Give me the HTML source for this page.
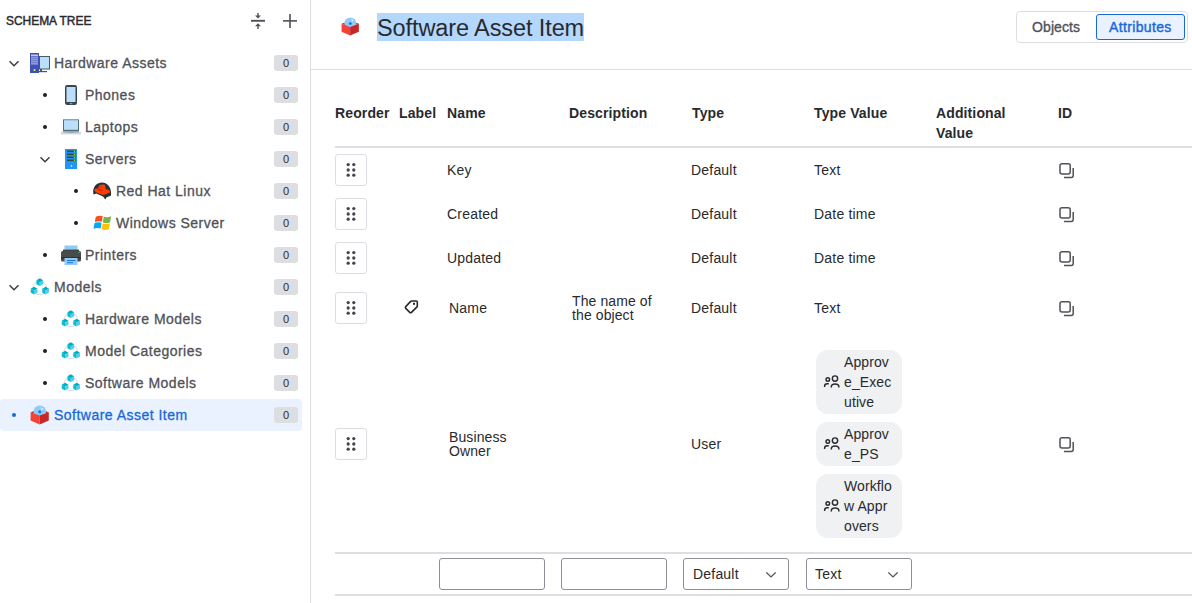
<!DOCTYPE html><html><head><meta charset="utf-8"><style>
*{box-sizing:border-box;margin:0;padding:0}
html,body{width:1192px;height:603px;overflow:hidden;background:#fff;font-family:"Liberation Sans",sans-serif;color:#292a2e}
.a{position:absolute}
svg{display:block}
.t{position:absolute;font-size:14px;line-height:20px;white-space:nowrap;color:#292a2e;letter-spacing:0.2px}
.t2{position:absolute;font-size:14px;line-height:14px;white-space:nowrap;color:#292a2e;letter-spacing:0.1px}
.th{position:absolute;font-size:14px;line-height:20px;white-space:nowrap;font-weight:bold;color:#292a2e;letter-spacing:0.12px}
.tt{position:absolute;font-size:14px;line-height:20px;white-space:nowrap;color:#505258;letter-spacing:0.48px;-webkit-text-stroke:0.3px currentColor}
.dot{position:absolute;width:4px;height:4px;border-radius:50%;background:#1f2024}
.badge{position:absolute;left:274px;width:24px;height:16px;border-radius:3px;background:#dddee1;font-size:11px;line-height:16px;text-align:center;color:#292a2e}
.hnd{position:absolute;left:335px;width:32px;height:32px;border:1px solid #dddee1;border-radius:3px}
.hnd i{position:absolute;width:3px;height:3px;border-radius:50%;background:#44464d}
.chip{position:absolute;left:816px;width:86px;background:#f0f1f2;border-radius:12px}
.inp{position:absolute;top:558px;width:106px;height:32px;border:1px solid #8c8f97;border-radius:3px;background:#fff}
</style></head><body>
<div class="a" style="left:310px;top:0;width:1px;height:603px;background:#dddee1"></div>
<div class="a" style="left:6px;top:13px;font-size:12.5px;line-height:16px;transform:scaleX(0.955);transform-origin:0 0;-webkit-text-stroke:0.45px #292a2e;color:#292a2e">SCHEMA TREE</div>
<svg class="a" style="left:250px;top:12px" width="16" height="18" viewBox="0 0 16 18"><rect x="1" y="7.85" width="14" height="1.9" fill="#505258"/><rect x="7.3" y="1" width="1.4" height="3.5" fill="#505258"/><polygon points="5,3.6 11,3.6 8,6.6" fill="#505258"/><rect x="7.3" y="13.5" width="1.4" height="3.5" fill="#505258"/><polygon points="5,14.2 11,14.2 8,11.2" fill="#505258"/></svg>
<svg class="a" style="left:282px;top:13px" width="16" height="16" viewBox="0 0 16 16"><rect x="1" y="7.1" width="14" height="1.6" fill="#505258"/><rect x="7.2" y="1" width="1.6" height="14" fill="#505258"/></svg>
<div class="a" style="left:9px;top:60px"><svg width="10" height="8" viewBox="0 0 10 8"><polyline points="0.5,1.3 5,5.7 9.5,1.3" fill="none" stroke="#3b3d42" stroke-width="1.5"/></svg></div>
<div class="a" style="left:30px;top:53px"><svg width="20" height="20" viewBox="0 0 20 20"><rect x="9.5" y="3.5" width="10" height="12.5" fill="#bbdefb" stroke="#455a64" stroke-width="1"/><rect x="10" y="16" width="2" height="2.2" fill="#455a64"/><rect x="9" y="18" width="8" height="1.2" fill="#455a64"/><rect x="0" y="0" width="9" height="20" fill="#3f51b5"/><rect x="1" y="1.5" width="7" height="1.8" fill="#c5cae9"/><rect x="1" y="4.4" width="7" height="1" fill="#c5cae9"/><rect x="1" y="6.4" width="7" height="1" fill="#c5cae9"/><rect x="1" y="8.4" width="7" height="1" fill="#c5cae9"/><rect x="1" y="10.4" width="7" height="1" fill="#c5cae9"/><circle cx="4.5" cy="17" r="1" fill="#eeff41"/></svg></div>
<div class="tt" style="left:54px;top:53px;color:#505258">Hardware Assets</div>
<div class="badge" style="top:55px">0</div>
<div class="dot" style="left:43px;top:93px;background:#1f2024"></div>
<div class="a" style="left:61px;top:85px"><svg width="20" height="20" viewBox="0 0 20 20"><rect x="4" y="0" width="12" height="20" rx="2.2" fill="#37474f"/><rect x="5.5" y="2" width="9" height="15" fill="#bbdefb"/><ellipse cx="10" cy="18.6" rx="1.6" ry="0.6" fill="#90a4ae"/></svg></div>
<div class="tt" style="left:85px;top:85px;color:#505258">Phones</div>
<div class="badge" style="top:87px">0</div>
<div class="dot" style="left:43px;top:125px;background:#1f2024"></div>
<div class="a" style="left:61px;top:117px"><svg width="20" height="20" viewBox="0 0 20 20"><rect x="2" y="2" width="16" height="12.6" fill="#546e7a"/><rect x="2" y="2" width="16" height="1" fill="#90a4ae"/><rect x="3" y="3.2" width="14" height="9.6" fill="#bbdefb"/><rect x="0" y="14.6" width="20" height="2.8" fill="#cfd8dc"/><rect x="2.5" y="14.6" width="15" height="0.8" fill="#78909c"/><rect x="7.5" y="15.2" width="5" height="0.8" fill="#90a4ae"/></svg></div>
<div class="tt" style="left:85px;top:117px;color:#505258">Laptops</div>
<div class="badge" style="top:119px">0</div>
<div class="a" style="left:40px;top:156px"><svg width="10" height="8" viewBox="0 0 10 8"><polyline points="0.5,1.3 5,5.7 9.5,1.3" fill="none" stroke="#3b3d42" stroke-width="1.5"/></svg></div>
<div class="a" style="left:61px;top:149px"><svg width="20" height="20" viewBox="0 0 20 20"><rect x="4" y="0" width="12" height="20" fill="#2196f3"/><rect x="6" y="1.5" width="9" height="1.6" fill="#37474f"/><rect x="12.8" y="1.5" width="1.4" height="1.6" fill="#64dd17"/><rect x="6" y="4.5" width="9" height="1.6" fill="#37474f"/><rect x="12.8" y="4.5" width="1.4" height="1.6" fill="#64dd17"/><rect x="6" y="7.5" width="9" height="1.6" fill="#37474f"/><rect x="12.8" y="7.5" width="1.4" height="1.6" fill="#64dd17"/><rect x="6" y="10.5" width="9" height="1.6" fill="#37474f"/><rect x="12.8" y="10.5" width="1.4" height="1.6" fill="#64dd17"/><circle cx="10.5" cy="17" r="0.8" fill="#fff"/></svg></div>
<div class="tt" style="left:85px;top:149px;color:#505258">Servers</div>
<div class="badge" style="top:151px">0</div>
<div class="dot" style="left:74px;top:189px;background:#1f2024"></div>
<div class="a" style="left:92px;top:181px"><svg width="20" height="20" viewBox="0 0 20 20"><path d="M1.5,13.6 L4.3,12.6 L11,15.6 L13.3,18.4 L14.7,16.2 L18.8,14.7 C20.2,7 15.8,1.4 10,1.4 C4.2,1.4 0,6.5 1.5,13.4 Z" fill="#263238"/><path d="M2.5,8.3 C4,7.4 5.5,7.6 6.4,7.3 C6.4,5.5 6.6,4.3 7.6,3.9 C9,3.6 11,3.2 12.3,3.5 C13.4,3.9 13.5,6.5 13.6,8.1 C15,8.6 17.6,9 17.9,10.2 C18,11.6 17,12 16.2,12 C14,13.5 12,13.9 10.5,13.7 C7.5,13.1 4.5,11.6 3.2,10.5 C2.5,9.5 2.2,8.8 2.5,8.3 Z" fill="#ff3d00"/><polygon points="6.3,8.1 10.2,9.0 10.2,9.9 6.1,9.1" fill="#8a2a10"/><rect x="7.3" y="5.3" width="1.7" height="0.8" fill="#a33010"/></svg></div>
<div class="tt" style="left:116px;top:181px;color:#505258">Red Hat Linux</div>
<div class="badge" style="top:183px">0</div>
<div class="dot" style="left:74px;top:221px;background:#1f2024"></div>
<div class="a" style="left:92px;top:213px"><svg width="20" height="20" viewBox="0 0 20 20"><g transform="translate(0,2) scale(1,0.84) translate(0,-1.5)"><path d="M3.8,3.5 Q7.2,1.5 10.8,3 L9.8,9.6 Q6.4,8.2 2.8,9.8 Z" fill="#f4511e"/><path d="M11.8,3.6 Q15.2,5 19.2,3 L18,10.5 Q14.4,12 10.8,10.4 Z" fill="#7cb342"/><path d="M2.6,10.9 Q6,9.4 9.6,10.8 L8.6,17.6 Q5,16 1.4,17.8 Z" fill="#03a9f4"/><path d="M10.6,11.6 Q14.2,13 17.8,11.6 L16.8,18.6 Q13.2,20 9.6,18.4 Z" fill="#ffc107"/></g></svg></div>
<div class="tt" style="left:116px;top:213px;color:#505258">Windows Server</div>
<div class="badge" style="top:215px">0</div>
<div class="dot" style="left:43px;top:253px;background:#1f2024"></div>
<div class="a" style="left:61px;top:245px"><svg width="20" height="20" viewBox="0 0 20 20"><rect x="3.5" y="0.5" width="13" height="6" fill="#90caf9"/><rect x="2" y="4.6" width="16" height="2" fill="#424242"/><rect x="0" y="6" width="20" height="10.5" rx="1.5" fill="#4a4a4a"/><rect x="0" y="12.2" width="20" height="1.2" fill="#2b2b2b"/><rect x="17.3" y="7" width="1.6" height="1" fill="#00c853"/><rect x="3.5" y="13" width="13" height="7" fill="#90caf9"/><rect x="6" y="15" width="8.5" height="1" fill="#1976d2"/><rect x="6" y="17.2" width="6" height="1" fill="#1976d2"/></svg></div>
<div class="tt" style="left:85px;top:245px;color:#505258">Printers</div>
<div class="badge" style="top:247px">0</div>
<div class="a" style="left:9px;top:284px"><svg width="10" height="8" viewBox="0 0 10 8"><polyline points="0.5,1.3 5,5.7 9.5,1.3" fill="none" stroke="#3b3d42" stroke-width="1.5"/></svg></div>
<div class="a" style="left:30px;top:277px"><svg width="20" height="20" viewBox="0 0 20 20"><circle cx="9.8" cy="11" r="6.8" fill="none" stroke="#d5d9de" stroke-width="1"/><polygon points="9.80,1.30 6.42,3.25 9.80,5.20 13.18,3.25" fill="#00acc1"/><polygon points="6.42,3.25 6.42,7.15 9.80,9.10 9.80,5.20" fill="#00bcd4"/><polygon points="9.80,5.20 9.80,9.10 13.18,7.15 13.18,3.25" fill="#4dd0e1"/><polygon points="4.10,9.70 0.72,11.65 4.10,13.60 7.48,11.65" fill="#00acc1"/><polygon points="0.72,11.65 0.72,15.55 4.10,17.50 4.10,13.60" fill="#00bcd4"/><polygon points="4.10,13.60 4.10,17.50 7.48,15.55 7.48,11.65" fill="#4dd0e1"/><polygon points="15.60,9.70 12.22,11.65 15.60,13.60 18.98,11.65" fill="#00acc1"/><polygon points="12.22,11.65 12.22,15.55 15.60,17.50 15.60,13.60" fill="#00bcd4"/><polygon points="15.60,13.60 15.60,17.50 18.98,15.55 18.98,11.65" fill="#4dd0e1"/></svg></div>
<div class="tt" style="left:54px;top:277px;color:#505258">Models</div>
<div class="badge" style="top:279px">0</div>
<div class="dot" style="left:43px;top:317px;background:#1f2024"></div>
<div class="a" style="left:61px;top:309px"><svg width="20" height="20" viewBox="0 0 20 20"><circle cx="9.8" cy="11" r="6.8" fill="none" stroke="#d5d9de" stroke-width="1"/><polygon points="9.80,1.30 6.42,3.25 9.80,5.20 13.18,3.25" fill="#00acc1"/><polygon points="6.42,3.25 6.42,7.15 9.80,9.10 9.80,5.20" fill="#00bcd4"/><polygon points="9.80,5.20 9.80,9.10 13.18,7.15 13.18,3.25" fill="#4dd0e1"/><polygon points="4.10,9.70 0.72,11.65 4.10,13.60 7.48,11.65" fill="#00acc1"/><polygon points="0.72,11.65 0.72,15.55 4.10,17.50 4.10,13.60" fill="#00bcd4"/><polygon points="4.10,13.60 4.10,17.50 7.48,15.55 7.48,11.65" fill="#4dd0e1"/><polygon points="15.60,9.70 12.22,11.65 15.60,13.60 18.98,11.65" fill="#00acc1"/><polygon points="12.22,11.65 12.22,15.55 15.60,17.50 15.60,13.60" fill="#00bcd4"/><polygon points="15.60,13.60 15.60,17.50 18.98,15.55 18.98,11.65" fill="#4dd0e1"/></svg></div>
<div class="tt" style="left:85px;top:309px;color:#505258">Hardware Models</div>
<div class="badge" style="top:311px">0</div>
<div class="dot" style="left:43px;top:349px;background:#1f2024"></div>
<div class="a" style="left:61px;top:341px"><svg width="20" height="20" viewBox="0 0 20 20"><circle cx="9.8" cy="11" r="6.8" fill="none" stroke="#d5d9de" stroke-width="1"/><polygon points="9.80,1.30 6.42,3.25 9.80,5.20 13.18,3.25" fill="#00acc1"/><polygon points="6.42,3.25 6.42,7.15 9.80,9.10 9.80,5.20" fill="#00bcd4"/><polygon points="9.80,5.20 9.80,9.10 13.18,7.15 13.18,3.25" fill="#4dd0e1"/><polygon points="4.10,9.70 0.72,11.65 4.10,13.60 7.48,11.65" fill="#00acc1"/><polygon points="0.72,11.65 0.72,15.55 4.10,17.50 4.10,13.60" fill="#00bcd4"/><polygon points="4.10,13.60 4.10,17.50 7.48,15.55 7.48,11.65" fill="#4dd0e1"/><polygon points="15.60,9.70 12.22,11.65 15.60,13.60 18.98,11.65" fill="#00acc1"/><polygon points="12.22,11.65 12.22,15.55 15.60,17.50 15.60,13.60" fill="#00bcd4"/><polygon points="15.60,13.60 15.60,17.50 18.98,15.55 18.98,11.65" fill="#4dd0e1"/></svg></div>
<div class="tt" style="left:85px;top:341px;color:#505258">Model Categories</div>
<div class="badge" style="top:343px">0</div>
<div class="dot" style="left:43px;top:381px;background:#1f2024"></div>
<div class="a" style="left:61px;top:373px"><svg width="20" height="20" viewBox="0 0 20 20"><circle cx="9.8" cy="11" r="6.8" fill="none" stroke="#d5d9de" stroke-width="1"/><polygon points="9.80,1.30 6.42,3.25 9.80,5.20 13.18,3.25" fill="#00acc1"/><polygon points="6.42,3.25 6.42,7.15 9.80,9.10 9.80,5.20" fill="#00bcd4"/><polygon points="9.80,5.20 9.80,9.10 13.18,7.15 13.18,3.25" fill="#4dd0e1"/><polygon points="4.10,9.70 0.72,11.65 4.10,13.60 7.48,11.65" fill="#00acc1"/><polygon points="0.72,11.65 0.72,15.55 4.10,17.50 4.10,13.60" fill="#00bcd4"/><polygon points="4.10,13.60 4.10,17.50 7.48,15.55 7.48,11.65" fill="#4dd0e1"/><polygon points="15.60,9.70 12.22,11.65 15.60,13.60 18.98,11.65" fill="#00acc1"/><polygon points="12.22,11.65 12.22,15.55 15.60,17.50 15.60,13.60" fill="#00bcd4"/><polygon points="15.60,13.60 15.60,17.50 18.98,15.55 18.98,11.65" fill="#4dd0e1"/></svg></div>
<div class="tt" style="left:85px;top:373px;color:#505258">Software Models</div>
<div class="badge" style="top:375px">0</div>
<div class="a" style="left:0;top:399px;width:302px;height:32px;background:#e9f2fe;border-radius:4px"></div>
<div class="dot" style="left:12px;top:413px;background:#1868db"></div>
<div class="a" style="left:30px;top:405px"><svg width="20" height="20" viewBox="0 0 20 20"><polygon points="0.6,7.2 9.6,4.2 18.8,7.2 9.6,10.4" fill="#b71c1c"/><circle cx="9.8" cy="6.8" r="6.3" fill="#90caf9"/><path d="M11,2.2 L13.5,3.5 L11.2,6 Z" fill="#e3f2fd" opacity="0.8"/><circle cx="9.8" cy="6.8" r="1.6" fill="#1e88e5"/><circle cx="9.8" cy="6.8" r="0.6" fill="#b71c1c"/><polygon points="0.6,7.2 9.6,10.4 9.6,19.6 0.6,15.4" fill="#f44336"/><polygon points="9.6,10.4 18.8,7.2 18.8,15.4 9.6,19.6" fill="#c62828"/></svg></div>
<div class="tt" style="left:54px;top:405px;color:#1868db">Software Asset Item</div>
<div class="badge" style="top:407px">0</div>
<div class="a" style="left:311px;top:69px;width:881px;height:1px;background:#dddee1"></div>
<div class="a" style="left:341px;top:17px"><svg width="19" height="19" viewBox="0 0 20 20"><polygon points="0.6,7.2 9.6,4.2 18.8,7.2 9.6,10.4" fill="#b71c1c"/><circle cx="9.8" cy="6.8" r="6.3" fill="#90caf9"/><path d="M11,2.2 L13.5,3.5 L11.2,6 Z" fill="#e3f2fd" opacity="0.8"/><circle cx="9.8" cy="6.8" r="1.6" fill="#1e88e5"/><circle cx="9.8" cy="6.8" r="0.6" fill="#b71c1c"/><polygon points="0.6,7.2 9.6,10.4 9.6,19.6 0.6,15.4" fill="#f44336"/><polygon points="9.6,10.4 18.8,7.2 18.8,15.4 9.6,19.6" fill="#c62828"/></svg></div>
<div class="a" style="left:377px;top:13px;height:28px;width:207px;background:#b4d7fd"></div>
<div class="a" style="left:377px;top:14px;font-size:23.5px;line-height:28px;letter-spacing:-0.1px;color:#292a2e;white-space:nowrap">Software Asset Item</div>
<div class="a" style="left:1016px;top:11px;width:172px;height:32px;border:1px solid #dddee1;border-radius:4px"></div>
<div class="a" style="left:1096px;top:14px;width:89px;height:26px;border:1px solid #1868db;border-radius:3px;background:#e9f2fe"></div>
<div class="t" style="left:1032px;top:17px;color:#505258;letter-spacing:0.1px;-webkit-text-stroke:0.35px #505258">Objects</div>
<div class="t" style="left:1109px;top:17px;color:#1868db;letter-spacing:0.35px;-webkit-text-stroke:0.4px #1868db">Attributes</div>
<div class="th" style="left:335px;top:103px">Reorder</div>
<div class="th" style="left:399px;top:103px">Label</div>
<div class="th" style="left:447px;top:103px">Name</div>
<div class="th" style="left:569px;top:103px">Description</div>
<div class="th" style="left:692px;top:103px">Type</div>
<div class="th" style="left:814px;top:103px">Type Value</div>
<div class="th" style="left:936px;top:103px">Additional</div>
<div class="th" style="left:1058px;top:103px">ID</div>
<div class="th" style="left:936px;top:123px">Value</div>
<div class="a" style="left:335px;top:146px;width:857px;height:2px;background:#dddee1"></div>
<div class="hnd" style="top:154px"><svg class="a" style="left:-1px;top:-1px" width="32" height="32" viewBox="0 0 32 32"><circle cx="13.2" cy="10.6" r="1.65" fill="#44464d"/><circle cx="13.2" cy="16.0" r="1.65" fill="#44464d"/><circle cx="13.2" cy="21.2" r="1.65" fill="#44464d"/><circle cx="18.8" cy="10.6" r="1.65" fill="#44464d"/><circle cx="18.8" cy="16.0" r="1.65" fill="#44464d"/><circle cx="18.8" cy="21.2" r="1.65" fill="#44464d"/></svg></div>
<div class="t" style="left:447px;top:160px">Key</div>
<div class="t" style="left:691px;top:160px">Default</div>
<div class="t" style="left:814px;top:160px">Text</div>
<svg class="a" style="left:1055px;top:159px" width="22" height="22" viewBox="0 0 22 22"><rect x="5" y="4.8" width="10.2" height="10.2" rx="2" fill="none" stroke="#505258" stroke-width="1.5"/><path d="M18.2,9.0 V16.4 Q18.2,18.4 16.2,18.4 H9.0" fill="none" stroke="#505258" stroke-width="1.5"/></svg>
<div class="hnd" style="top:198px"><svg class="a" style="left:-1px;top:-1px" width="32" height="32" viewBox="0 0 32 32"><circle cx="13.2" cy="10.6" r="1.65" fill="#44464d"/><circle cx="13.2" cy="16.0" r="1.65" fill="#44464d"/><circle cx="13.2" cy="21.2" r="1.65" fill="#44464d"/><circle cx="18.8" cy="10.6" r="1.65" fill="#44464d"/><circle cx="18.8" cy="16.0" r="1.65" fill="#44464d"/><circle cx="18.8" cy="21.2" r="1.65" fill="#44464d"/></svg></div>
<div class="t" style="left:447px;top:204px">Created</div>
<div class="t" style="left:691px;top:204px">Default</div>
<div class="t" style="left:814px;top:204px">Date time</div>
<svg class="a" style="left:1055px;top:203px" width="22" height="22" viewBox="0 0 22 22"><rect x="5" y="4.8" width="10.2" height="10.2" rx="2" fill="none" stroke="#505258" stroke-width="1.5"/><path d="M18.2,9.0 V16.4 Q18.2,18.4 16.2,18.4 H9.0" fill="none" stroke="#505258" stroke-width="1.5"/></svg>
<div class="hnd" style="top:242px"><svg class="a" style="left:-1px;top:-1px" width="32" height="32" viewBox="0 0 32 32"><circle cx="13.2" cy="10.6" r="1.65" fill="#44464d"/><circle cx="13.2" cy="16.0" r="1.65" fill="#44464d"/><circle cx="13.2" cy="21.2" r="1.65" fill="#44464d"/><circle cx="18.8" cy="10.6" r="1.65" fill="#44464d"/><circle cx="18.8" cy="16.0" r="1.65" fill="#44464d"/><circle cx="18.8" cy="21.2" r="1.65" fill="#44464d"/></svg></div>
<div class="t" style="left:447px;top:248px">Updated</div>
<div class="t" style="left:691px;top:248px">Default</div>
<div class="t" style="left:814px;top:248px">Date time</div>
<svg class="a" style="left:1055px;top:247px" width="22" height="22" viewBox="0 0 22 22"><rect x="5" y="4.8" width="10.2" height="10.2" rx="2" fill="none" stroke="#505258" stroke-width="1.5"/><path d="M18.2,9.0 V16.4 Q18.2,18.4 16.2,18.4 H9.0" fill="none" stroke="#505258" stroke-width="1.5"/></svg>
<div class="hnd" style="top:292px"><svg class="a" style="left:-1px;top:-1px" width="32" height="32" viewBox="0 0 32 32"><circle cx="13.2" cy="10.6" r="1.65" fill="#44464d"/><circle cx="13.2" cy="16.0" r="1.65" fill="#44464d"/><circle cx="13.2" cy="21.2" r="1.65" fill="#44464d"/><circle cx="18.8" cy="10.6" r="1.65" fill="#44464d"/><circle cx="18.8" cy="16.0" r="1.65" fill="#44464d"/><circle cx="18.8" cy="21.2" r="1.65" fill="#44464d"/></svg></div>
<svg class="a" style="left:400px;top:296px" width="22" height="22" viewBox="0 0 22 22"><path d="M11.9,5 H16.2 Q17.3,5 17.3,6.1 V10.2 Q17.3,10.6 17,10.9 L11.45,16.35 Q10.6,17.2 9.75,16.35 L5.75,12.35 Q4.9,11.5 5.72,10.63 L10.18,5.87 Q11,5 11.9,5 Z" fill="none" stroke="#292a2e" stroke-width="1.6" stroke-linejoin="round"/><rect x="13" y="6.8" width="2" height="2" fill="#292a2e"/></svg>
<div class="t" style="left:449px;top:298px">Name</div>
<div class="t2" style="left:572px;top:294px">The name of<br>the object</div>
<div class="t" style="left:691px;top:298px">Default</div>
<div class="t" style="left:814px;top:298px">Text</div>
<svg class="a" style="left:1055px;top:297px" width="22" height="22" viewBox="0 0 22 22"><rect x="5" y="4.8" width="10.2" height="10.2" rx="2" fill="none" stroke="#505258" stroke-width="1.5"/><path d="M18.2,9.0 V16.4 Q18.2,18.4 16.2,18.4 H9.0" fill="none" stroke="#505258" stroke-width="1.5"/></svg>
<div class="hnd" style="top:428px"><svg class="a" style="left:-1px;top:-1px" width="32" height="32" viewBox="0 0 32 32"><circle cx="13.2" cy="10.6" r="1.65" fill="#44464d"/><circle cx="13.2" cy="16.0" r="1.65" fill="#44464d"/><circle cx="13.2" cy="21.2" r="1.65" fill="#44464d"/><circle cx="18.8" cy="10.6" r="1.65" fill="#44464d"/><circle cx="18.8" cy="16.0" r="1.65" fill="#44464d"/><circle cx="18.8" cy="21.2" r="1.65" fill="#44464d"/></svg></div>
<div class="t2" style="left:449px;top:430px">Business<br>Owner</div>
<div class="t" style="left:691px;top:434px">User</div>
<svg class="a" style="left:1055px;top:433px" width="22" height="22" viewBox="0 0 22 22"><rect x="5" y="4.8" width="10.2" height="10.2" rx="2" fill="none" stroke="#505258" stroke-width="1.5"/><path d="M18.2,9.0 V16.4 Q18.2,18.4 16.2,18.4 H9.0" fill="none" stroke="#505258" stroke-width="1.5"/></svg>
<div class="chip" style="top:350px;height:64px"></div>
<svg class="a" style="left:821px;top:372px" width="22" height="20" viewBox="0 0 22 20"><circle cx="14" cy="6.5" r="2.65" fill="none" stroke="#292a2e" stroke-width="1.45"/><circle cx="6.8" cy="7.5" r="1.8" fill="none" stroke="#292a2e" stroke-width="1.45"/><path d="M10.3,15.6 V14.8 C10.3,13.1 11.6,12.0 14.1,12.0 C16.6,12.0 17.9,13.1 17.9,14.8 V15.6" fill="none" stroke="#292a2e" stroke-width="1.45"/><path d="M3.6,15 V14.2 C3.6,12.6 4.6,11.8 6.2,11.8 H7.8" fill="none" stroke="#292a2e" stroke-width="1.45"/></svg>
<div class="t" style="left:844px;top:352px;letter-spacing:0.1px">Approv<br>e_Exec<br>utive</div>
<div class="chip" style="top:422px;height:44px"></div>
<svg class="a" style="left:821px;top:434px" width="22" height="20" viewBox="0 0 22 20"><circle cx="14" cy="6.5" r="2.65" fill="none" stroke="#292a2e" stroke-width="1.45"/><circle cx="6.8" cy="7.5" r="1.8" fill="none" stroke="#292a2e" stroke-width="1.45"/><path d="M10.3,15.6 V14.8 C10.3,13.1 11.6,12.0 14.1,12.0 C16.6,12.0 17.9,13.1 17.9,14.8 V15.6" fill="none" stroke="#292a2e" stroke-width="1.45"/><path d="M3.6,15 V14.2 C3.6,12.6 4.6,11.8 6.2,11.8 H7.8" fill="none" stroke="#292a2e" stroke-width="1.45"/></svg>
<div class="t" style="left:844px;top:424px;letter-spacing:0.1px">Approv<br>e_PS</div>
<div class="chip" style="top:474px;height:64px"></div>
<svg class="a" style="left:821px;top:496px" width="22" height="20" viewBox="0 0 22 20"><circle cx="14" cy="6.5" r="2.65" fill="none" stroke="#292a2e" stroke-width="1.45"/><circle cx="6.8" cy="7.5" r="1.8" fill="none" stroke="#292a2e" stroke-width="1.45"/><path d="M10.3,15.6 V14.8 C10.3,13.1 11.6,12.0 14.1,12.0 C16.6,12.0 17.9,13.1 17.9,14.8 V15.6" fill="none" stroke="#292a2e" stroke-width="1.45"/><path d="M3.6,15 V14.2 C3.6,12.6 4.6,11.8 6.2,11.8 H7.8" fill="none" stroke="#292a2e" stroke-width="1.45"/></svg>
<div class="t" style="left:844px;top:476px;letter-spacing:0.1px">Workflo<br>w Appr<br>overs</div>
<div class="a" style="left:335px;top:552px;width:857px;height:2px;background:#dddee1"></div>
<div class="a" style="left:335px;top:594px;width:857px;height:2px;background:#dddee1"></div>
<div class="inp" style="left:439px"></div><div class="inp" style="left:561px"></div>
<div class="inp" style="left:683px"></div><div class="inp" style="left:806px"></div>
<div class="t" style="left:693px;top:564px">Default</div><div class="a" style="left:766px;top:571px"><svg width="10" height="8" viewBox="0 0 10 8"><polyline points="0.3,1.4 5,5.9 9.7,1.4" fill="none" stroke="#505258" stroke-width="1.4"/></svg></div>
<div class="t" style="left:815px;top:564px">Text</div><div class="a" style="left:888px;top:571px"><svg width="10" height="8" viewBox="0 0 10 8"><polyline points="0.3,1.4 5,5.9 9.7,1.4" fill="none" stroke="#505258" stroke-width="1.4"/></svg></div>
</body></html>
